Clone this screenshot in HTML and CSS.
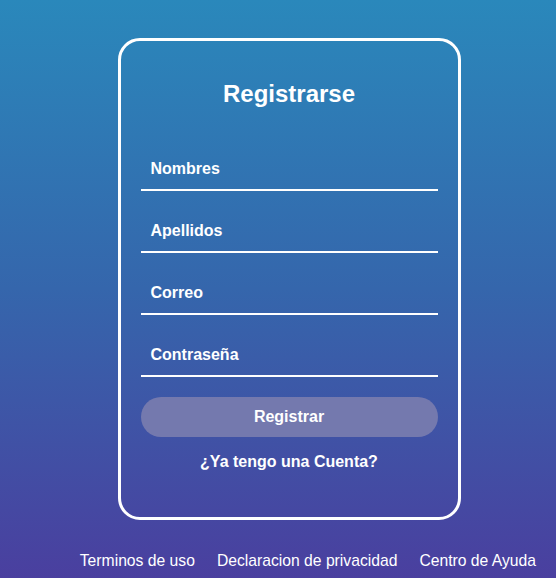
FILE: index.html
```html
<!DOCTYPE html>
<html lang="es">
<head>
<meta charset="utf-8">
<title>Registrarse</title>
<link rel="stylesheet" href="styles.css">
</head>
<body>
<main class="page">
  <div class="stage">
    <form class="card">
      <h1 class="title">Registrarse</h1>
      <div class="fields">
        <label class="field"><span>Nombres</span></label>
        <label class="field"><span>Apellidos</span></label>
        <label class="field"><span>Correo</span></label>
        <label class="field"><span>Contraseña</span></label>
      </div>
      <button type="button" class="btn">Registrar</button>
      <a class="account" href="#">¿Ya tengo una Cuenta?</a>
    </form>
  </div>
  <footer class="footer">
    <a href="#">Terminos de uso</a>
    <a href="#">Declaracion de privacidad</a>
    <a href="#">Centro de Ayuda</a>
  </footer>
</main>
</body>
</html>
```
FILE: styles.css
```css
* { box-sizing: border-box; }
html, body { margin: 0; padding: 0; }
body {
  width: 556px;
  height: 578px;
  overflow: hidden;
  font-family: "Liberation Sans", Arial, sans-serif;
  color: #fff;
  background: linear-gradient(to bottom, #2a88bb 0%, #3566ac 50%, #4a3f9f 100%);
}
.page {
  display: flex;
  flex-direction: column;
  padding-top: 38px;
}
.stage {
  display: flex;
  justify-content: center;
  padding-left: 22px;
}
.card {
  width: 343px;
  height: 482px;
  border: 3px solid #fff;
  border-radius: 22px;
  padding: 39px 20px 0;
  display: flex;
  flex-direction: column;
  align-items: stretch;
}
.title {
  margin: 0;
  font-size: 24px;
  font-weight: bold;
  text-align: center;
  line-height: 28px;
}
.fields {
  margin-top: 43px;
  display: flex;
  flex-direction: column;
  gap: 22px;
}
.field {
  height: 40px;
  border-bottom: 2px solid #fff;
  display: flex;
  align-items: center;
  padding: 0 0 2px 10px;
  font-size: 16px;
  font-weight: bold;
}
.btn {
  margin-top: 20px;
  height: 40px;
  border: none;
  border-radius: 20px;
  background: #7479ae;
  color: #fff;
  font-family: inherit;
  font-size: 16px;
  font-weight: bold;
  padding: 0;
}
.account {
  margin-top: 16px;
  text-align: center;
  color: #fff;
  text-decoration: none;
  font-size: 16px;
  font-weight: bold;
}
.footer {
  margin-top: 32px;
  display: flex;
  justify-content: flex-end;
  gap: 22px;
  padding-right: 20px;
}
.footer a {
  color: #fff;
  text-decoration: none;
  font-size: 15.7px;
}
```
